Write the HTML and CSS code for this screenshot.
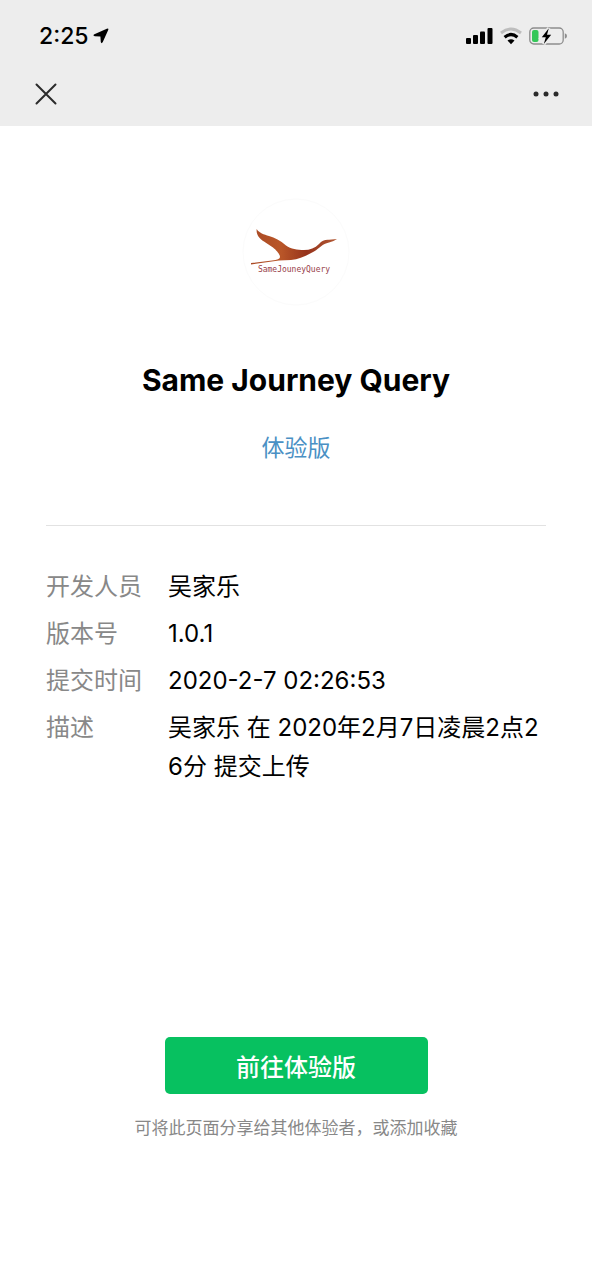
FILE: index.html
```html
<!DOCTYPE html>
<html lang="zh-CN">
<head>
<meta charset="utf-8">
<meta name="viewport" content="width=device-width, initial-scale=1">
<title>Same Journey Query</title>
<link rel="stylesheet" href="styles.css">
</head>
<body>
<header class="top">
  <div class="status">
    <div class="clock">
      <span>2:25</span>
      <svg width="16" height="16" viewBox="0 0 16 16" aria-hidden="true"><path d="M13.800.7Q15.900-.2 15.200 2L9.800 14Q8.500 16.300 7.800 14L7.400 8.600 1.800 8.200Q-.7 7.600 1.400 6.200Z"/></svg>
    </div>
    <div class="indicators">
      <svg width="27" height="18" viewBox="0 0 27 18" aria-hidden="true"><rect x="0" y="11" width="5" height="6" rx="1"/><rect x="7" y="8" width="5" height="9" rx="1"/><rect x="14" y="4.500" width="5" height="12.500" rx="1"/><rect x="21.500" y="1" width="5" height="16" rx="1"/></svg>
      <svg width="22" height="18" viewBox="0 0 22 18" aria-hidden="true"><path d="M1 6Q11-2 21 6" fill="none" stroke="#bdbdbd" stroke-width="3"/><path d="M4.600 10.200Q11 4.800 17.400 10.200" fill="none" stroke="#000" stroke-width="3.200"/><path d="M7.500 13.600Q11 10.800 14.500 13.600L11 17.200Z"/></svg>
      <svg width="39" height="20" viewBox="0 0 39 20" aria-hidden="true"><rect x=".8" y="2" width="33.400" height="16" rx="4" fill="none" stroke="#8d8d8d" stroke-width="1.300"/><path d="M35.800 7.300Q38 8 38 10T35.800 12.700Z" fill="#8d8d8d"/><rect x="3" y="4" width="6.500" height="12" rx="2" fill="#34c759"/><path d="M19.800 2.200 12.800 11.200H16.800L14.800 18 22.200 8.800H18Z" stroke="#ededed" stroke-width="3.500"/><path d="M19.800 2.200 12.800 11.200H16.800L14.800 18 22.200 8.800H18Z"/></svg>
    </div>
  </div>
  <nav class="bar">
    <button class="icon-button" type="button" aria-label="关闭"><svg width="22" height="22" viewBox="0 0 22 22"><path d="M1.500 1.500 20.500 20.500M20.500 1.500 1.500 20.500" stroke="#2b2b2b" stroke-width="2" stroke-linecap="round"/></svg></button>
    <button class="icon-button" type="button" aria-label="更多"><svg width="26" height="22" viewBox="0 0 26 22" fill="#2b2b2b"><circle cx="3" cy="11" r="2.500"/><circle cx="13" cy="11" r="2.500"/><circle cx="23" cy="11" r="2.500"/></svg></button>
  </nav>
</header>
<main class="content">
  <section class="intro">
    <svg class="logo" viewBox="0 0 108 108" role="img" aria-label="SameJouneyQuery">
      <defs><linearGradient id="bird" x1="0" y1="0" x2="1" y2="0"><stop offset="0" stop-color="#a94a25"/><stop offset=".35" stop-color="#b95628"/><stop offset=".65" stop-color="#96331c"/><stop offset="1" stop-color="#b35a35"/></linearGradient></defs>
      <circle cx="54" cy="54" r="53" fill="#fff" stroke="#fbfbfb"/>
      <path fill="url(#bird)" d="M14.700 31C17 35 22 36.500 27 38C33 39.500 38 42.500 44 47.500C49 51 55 52 62 52C68 52 73 50 77 46C80 42.500 83 41.500 87 41.800L95 41Q92 43 87 44.500C80 46 78 50 72 53.500C65 57.500 58 61 49 62L37 62.500 9 66.500V65L30 62.500Q38 61.500 38 59C38 56 34 52 31 49.500L22 43.500C17 40.500 14 36 14.700 31Z"/>
      <text class="logo-name" x="52" y="74" text-anchor="middle">SameJouneyQuery</text>
    </svg>
    <h1 class="name">Same Journey Query</h1>
    <p class="version">体验版</p>
  </section>
  <dl class="details">
    <dt>开发人员</dt><dd>吴家乐</dd>
    <dt>版本号</dt><dd>1.0.1</dd>
    <dt>提交时间</dt><dd>2020-2-7 02:26:53</dd>
    <dt>描述</dt><dd>吴家乐 在 2020年2月7日凌晨2点26分 提交上传</dd>
  </dl>
  <footer class="actions">
    <button class="primary" type="button">前往体验版</button>
    <p class="hint">可将此页面分享给其他体验者，或添加收藏</p>
  </footer>
</main>
</body>
</html>
```
FILE: styles.css
```css
* {
  box-sizing: border-box;
}

body {
  display: flex;
  flex-direction: column;
  min-height: 100vh;
  margin: 0;
  background: #fff;
  color: #000;
  font-family: Inter, "Noto Sans CJK SC", sans-serif;
}

h1, p, dl, dd {
  margin: 0;
}

svg {
  display: block;
}

button {
  border: 0;
  font: inherit;
  cursor: pointer;
}

.top {
  padding-bottom: 13px;
  background: #ededed;
}

.status {
  display: flex;
  align-items: center;
  justify-content: space-between;
  height: 72px;
  padding: 0 24px 0 39px;
}

.clock {
  display: flex;
  align-items: center;
  gap: 4px;
  font-size: 23px;
  font-weight: 500;
}

.indicators {
  display: flex;
  align-items: center;
  gap: 7px;
}

.bar {
  display: flex;
  align-items: center;
  justify-content: space-between;
  padding: 3px 25px 0 27px;
}

.icon-button {
  padding: 8px;
  background: none;
}

.content {
  flex: 1;
  display: flex;
  flex-direction: column;
  padding: 0 46px;
}

.intro {
  display: flex;
  flex-direction: column;
  align-items: center;
  padding: 72px 0 61px;
  border-bottom: 1px solid #e2e2e2;
}

.logo {
  width: 108px;
  height: 108px;
}

.logo-name {
  fill: #98404a;
  font-family: "DejaVu Sans Mono", monospace;
  font-size: 8px;
}

.name {
  margin-top: 54px;
  font-size: 30px;
  font-weight: 700;
  line-height: 40px;
}

.version {
  margin-top: 32px;
  color: #4a90c4;
  font-size: 23px;
  line-height: 32px;
}

.details {
  display: grid;
  grid-template-columns: 98px 1fr;
  gap: 8px 24px;
  padding: 41px 0;
  font-size: 24px;
  line-height: 39px;
}

.details dt {
  color: #888;
}

.details dd {
  word-break: break-all;
}

.actions {
  display: flex;
  flex-direction: column;
  align-items: center;
  gap: 20px;
  margin-top: auto;
  padding-bottom: 138px;
}

.primary {
  width: 263px;
  height: 57px;
  border-radius: 5px;
  background: #07c160;
  color: #fff;
  font-size: 24px;
  font-weight: 500;
}

.hint {
  color: #888;
  font-size: 17px;
  line-height: 28px;
}
```
